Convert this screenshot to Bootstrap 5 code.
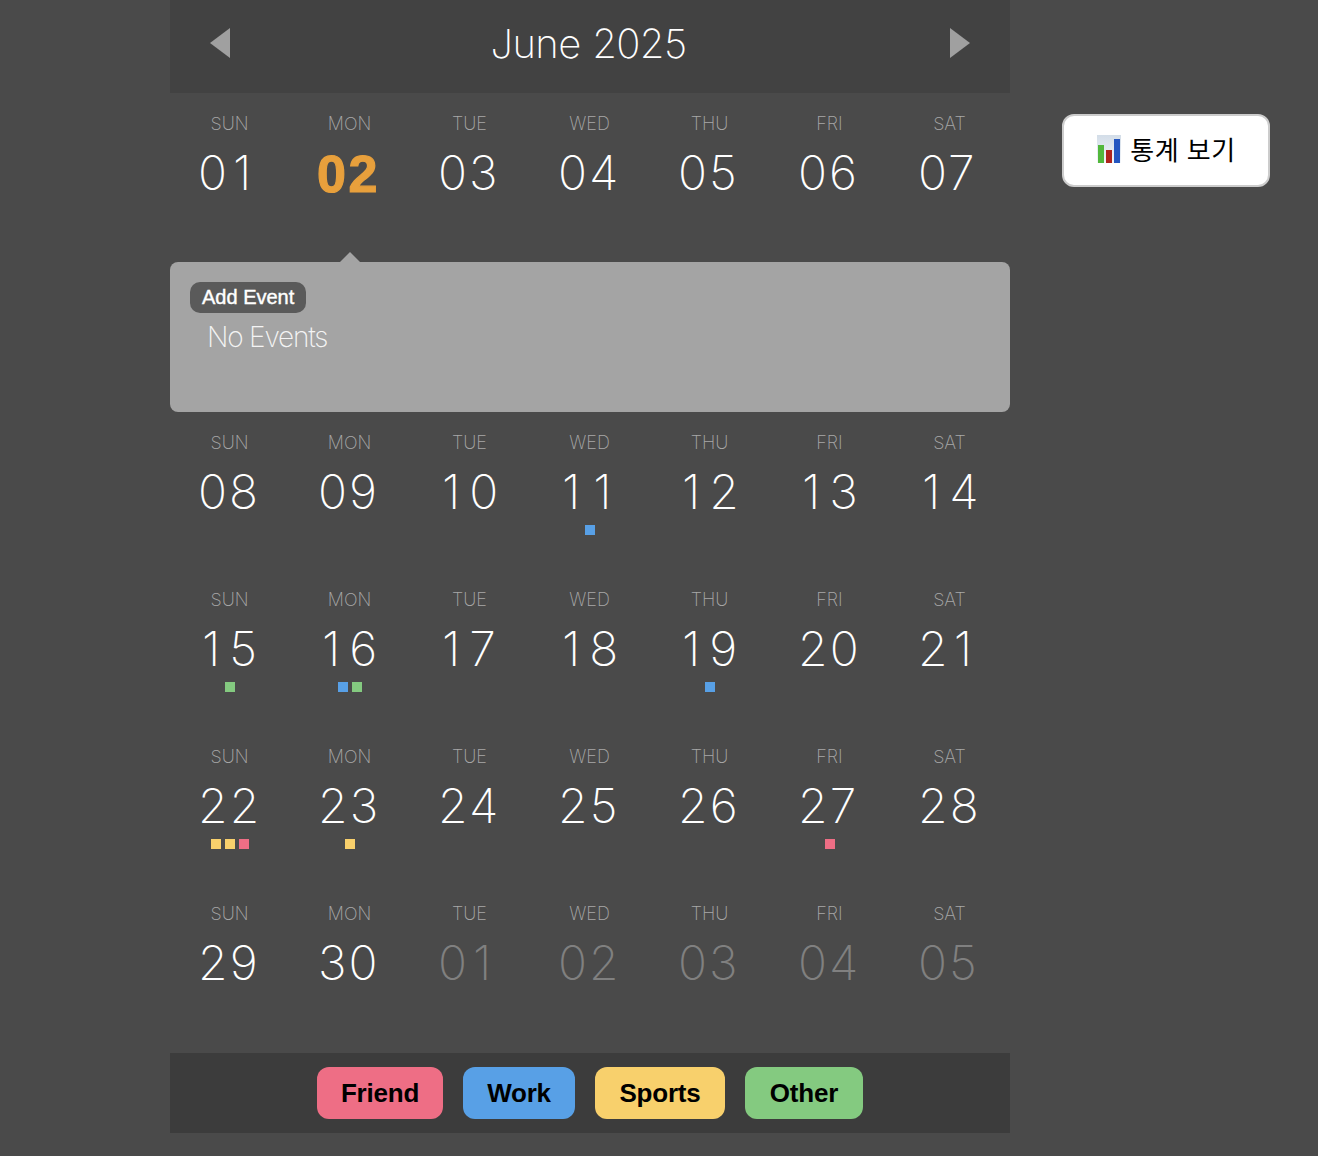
<!DOCTYPE html>
<html lang="ko">
  <head>
    <meta charset="UTF-8" />
    <meta name="viewport" content="width=device-width, initial-scale=1.0" />
    <title>Calendar</title>
    <link
      href="https://cdn.jsdelivr.net/npm/bootstrap@5.3.3/dist/css/bootstrap.min.css"
      rel="stylesheet"
    />
    <style>
      body {
        background: #4a4a4a;
        color: #fff;
        font-family: Inter, 'Liberation Sans', sans-serif;
        font-weight: 200;
      }
      .page {
        padding-left: 170px;
      }
      .calendar {
        width: 840px;
      }
      .calendar-header {
        height: 93px;
        padding: 0 40px 7px;
        background: #424242;
      }
      .calendar-title {
        padding: 1px 3px 0 0;
        font-size: 40px;
        font-weight: 200;
        line-height: 48px;
        letter-spacing: -0.6px;
        word-spacing: 1px;
      }
      .arrow {
        width: 20px;
        height: 30px;
        fill: #a0a0a0;
      }
      .week {
        height: 157px;
      }
      .day {
        width: 120px;
        padding-top: 20px;
      }
      .day-name {
        font-size: 18px;
        line-height: 22px;
        color: #a8a8a8;
        padding-right: 1px;
      }
      .day-number {
        height: 56px;
        font-size: 48px;
        line-height: 55px;
        margin-top: 10px;
        padding-left: 28px;
        letter-spacing: 2px;
        text-align: left;
      }
      /* die schmale 1 auf die Breite der anderen Ziffern bringen */
      .day-number.starts-one {
        padding-left: 32px;
        letter-spacing: 9px;
      }
      .day-number.ends-one {
        letter-spacing: 6px;
      }
      .day-number.starts-one.ends-one {
        letter-spacing: 13px;
      }
      .day-number.today {
        padding-left: 27px;
        color: #e8a03c;
        font-family: 'Liberation Sans', sans-serif;
        font-size: 52px;
        font-weight: 700;
        line-height: 58px;
        letter-spacing: 2.5px;
        -webkit-text-stroke: 1.2px #e8a03c;
      }
      .day-number.other {
        color: #808080;
      }
      .day-events {
        gap: 4px;
        margin-top: 5px;
      }
      .day-events span {
        width: 10px;
        height: 10px;
      }
      .friend {
        background: #ee6e85;
      }
      .work {
        background: #58a0e6;
      }
      .sports {
        background: #f8d06c;
      }
      .others {
        background: #84ca80;
      }
      .details {
        height: 150px;
        margin-top: 12px;
        padding: 20px;
        background: #a4a4a4;
        border-radius: 8px;
      }
      .details-arrow {
        top: -10px;
        left: 170px;
        width: 20px;
        height: 10px;
        fill: #a4a4a4;
      }
      .btn-add {
        height: 31px;
        padding: 0 12px;
        border: 0;
        border-radius: 10px;
        background: #5a5a5a;
        color: #fff;
        font: 400 20px/31px 'Liberation Sans', sans-serif;
        -webkit-text-stroke: 0.4px #fff;
      }
      .no-events {
        padding-left: 17px;
        font-size: 28px;
        line-height: 49px;
        letter-spacing: -1.2px;
        color: #f4f4f4;
      }
      .legend-bar {
        height: 80px;
        margin-top: 13px;
        gap: 20px;
        background: #3c3c3c;
      }
      .legend-bar span {
        height: 52px;
        border-radius: 12px;
        color: #000;
        text-align: center;
        font: 700 26px/52px 'Liberation Sans', sans-serif;
        letter-spacing: -0.2px;
      }
      .legend-bar .friend {
        width: 126px;
      }
      .legend-bar .work {
        width: 112px;
      }
      .legend-bar .sports {
        width: 130px;
      }
      .legend-bar .others {
        width: 118px;
      }
      .btn-stats {
        width: 208px;
        height: 73px;
        margin: 114px 0 0 52px;
        padding: 0 0 3px 1px;
        gap: 9px;
        border: 2px solid #ccc;
        border-radius: 12px;
        background: #fff;
        color: #000;
        font: 400 26px/30px 'Liberation Sans', 'Noto Sans CJK KR', sans-serif;
        letter-spacing: 0.5px;
      }
    </style>
  </head>
  <body>
    <div class="page d-flex align-items-start">
      <main class="calendar">
        <header
          class="calendar-header d-flex align-items-center justify-content-between"
        >
          <svg class="arrow" viewBox="0 0 20 30">
            <path d="M20 0v30L0 15z" />
          </svg>
          <h1 class="calendar-title m-0">June 2025</h1>
          <svg class="arrow" viewBox="0 0 20 30">
            <path d="M0 0v30l20-15z" />
          </svg>
        </header>

        <div class="weeks"></div>

        <footer
          class="legend-bar d-flex align-items-center justify-content-center"
        >
          <span class="friend">Friend</span>
          <span class="work">Work</span>
          <span class="sports">Sports</span>
          <span class="others">Other</span>
        </footer>
      </main>

      <button
        type="button"
        class="btn-stats d-flex align-items-center justify-content-center"
      >
        <svg width="24" height="28" viewBox="0 0 24 28">
          <defs>
            <linearGradient id="paper" x2="0" y2="1">
              <stop offset="0" stop-color="#d3dde8" />
              <stop offset="1" stop-color="#f3f6fa" />
            </linearGradient>
          </defs>
          <path fill="url(#paper)" d="M0 0h24v28H0z" />
          <path fill="#52b83c" d="M1 10h6v18H1z" />
          <path fill="#b0241c" d="M9 15h6v13H9z" />
          <path fill="#2456c0" d="M17 4h6v24h-6z" />
        </svg>
        <span class="pt-1">통계 보기</span>
      </button>
    </div>

    <template id="details-template">
      <section class="details position-relative">
        <svg class="details-arrow position-absolute" viewBox="0 0 20 10">
          <path d="M0 10L10 0l10 10z" />
        </svg>
        <button type="button" class="btn-add d-block">Add Event</button>
        <div class="no-events">No Events</div>
      </section>
    </template>

    <script src="https://cdn.jsdelivr.net/npm/bootstrap@5.3.3/dist/js/bootstrap.bundle.min.js"></script>
    <script>
      'use strict';

      const dayNames = ['SUN', 'MON', 'TUE', 'WED', 'THU', 'FRI', 'SAT'];
      const today = 2;
      const daysInMonth = 30;
      const events = {
        11: ['work'],
        15: ['others'],
        16: ['work', 'others'],
        19: ['work'],
        22: ['sports', 'sports', 'friend'],
        23: ['sports'],
        27: ['friend'],
      };

      const weeksEl = document.querySelector('.weeks');
      const detailsTemplate = document.querySelector('#details-template');

      for (let first = 1; first <= daysInMonth; first += 7) {
        const weekEl = document.createElement('div');
        weekEl.className = 'week d-flex';

        dayNames.forEach(function (name, i) {
          const day = first + i;
          const number = day > daysInMonth ? day - daysInMonth : day;
          const label = String(number).padStart(2, '0');
          let state = '';
          if (day === today) state = 'today';
          if (day > daysInMonth) state = 'other';
          if (label.startsWith('1')) state += ' starts-one';
          if (label.endsWith('1')) state += ' ends-one';

          const dots = (events[day] || [])
            .map((type) => `<span class="${type}"></span>`)
            .join('');

          weekEl.innerHTML += `
            <div class="day text-center">
              <div class="day-name">${name}</div>
              <div class="day-number ${state}">${label}</div>
              <div class="day-events d-flex justify-content-center">${dots}</div>
            </div>`;
        });

        weeksEl.append(weekEl);

        // Details unter der aktuellen Woche
        if (today >= first && today < first + 7) {
          weeksEl.append(detailsTemplate.content.cloneNode(true));
        }
      }
    </script>
  </body>
</html>
